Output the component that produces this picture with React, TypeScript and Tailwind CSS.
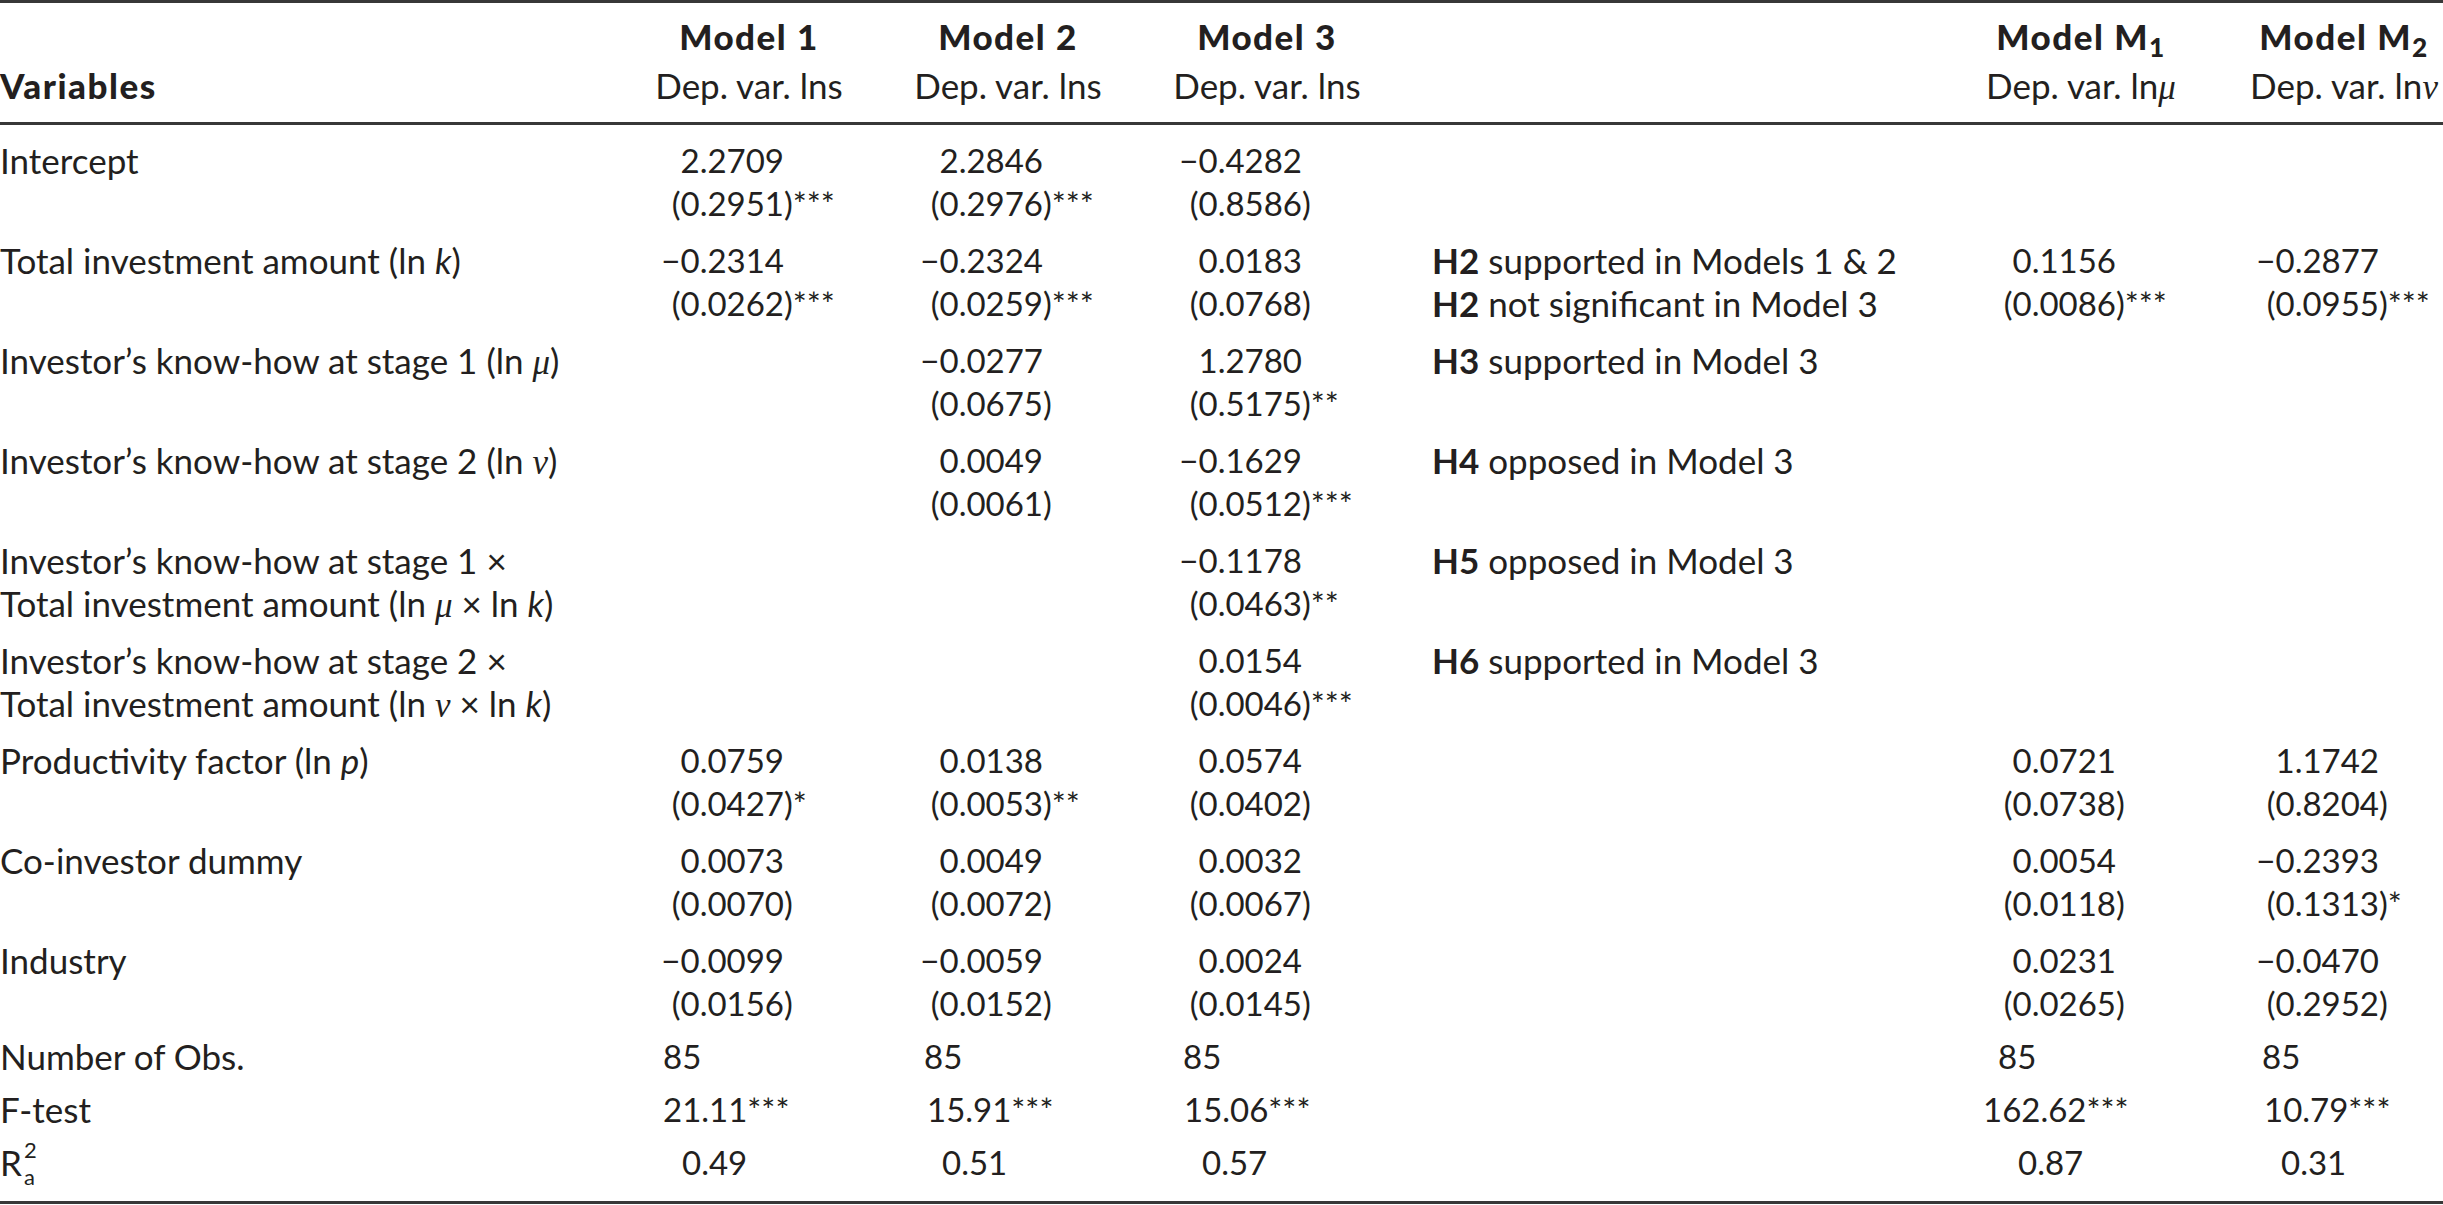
import type { ReactNode } from "react";

type Est = { c: string; cs?: string; s: string; ss?: string } | null;

type Row = {
  label: ReactNode;
  m: [Est, Est, Est];
  hyp?: ReactNode;
  mm: [Est, Est];
  last?: boolean;
};

const grid = "grid grid-cols-[634px_259px_259px_259px_555px_263px_214px]";

const Gr = ({ children }: { children: ReactNode }) => (
  <span className="font-['Liberation_Serif',serif] italic leading-none">{children}</span>
);

const H = ({ n }: { n: string }) => <span className="font-bold">{n}</span>;

const rows: Row[] = [
  {
    label: "Intercept",
    m: [
      { c: "2.2709", s: "0.2951", ss: "***" },
      { c: "2.2846", s: "0.2976", ss: "***" },
      { c: "−0.4282", s: "0.8586" },
    ],
    mm: [null, null],
  },
  {
    label: (
      <>
        Total investment amount (ln <i>k</i>)
      </>
    ),
    m: [
      { c: "−0.2314", s: "0.0262", ss: "***" },
      { c: "−0.2324", s: "0.0259", ss: "***" },
      { c: "0.0183", s: "0.0768" },
    ],
    hyp: (
      <>
        <div>
          <H n="H2" /> supported in Models 1 &amp; 2
        </div>
        <div>
          <H n="H2" /> not significant in Model 3
        </div>
      </>
    ),
    mm: [
      { c: "0.1156", s: "0.0086", ss: "***" },
      { c: "−0.2877", s: "0.0955", ss: "***" },
    ],
  },
  {
    label: (
      <>
        Investor’s know-how at stage 1 (ln <Gr>μ</Gr>)
      </>
    ),
    m: [null, { c: "−0.0277", s: "0.0675" }, { c: "1.2780", s: "0.5175", ss: "**" }],
    hyp: (
      <>
        <H n="H3" /> supported in Model 3
      </>
    ),
    mm: [null, null],
  },
  {
    label: (
      <>
        Investor’s know-how at stage 2 (ln <Gr>ν</Gr>)
      </>
    ),
    m: [null, { c: "0.0049", s: "0.0061" }, { c: "−0.1629", s: "0.0512", ss: "***" }],
    hyp: (
      <>
        <H n="H4" /> opposed in Model 3
      </>
    ),
    mm: [null, null],
  },
  {
    label: (
      <>
        <div>Investor’s know-how at stage 1 ×</div>
        <div>
          Total investment amount (ln <Gr>μ</Gr> × ln <i>k</i>)
        </div>
      </>
    ),
    m: [null, null, { c: "−0.1178", s: "0.0463", ss: "**" }],
    hyp: (
      <>
        <H n="H5" /> opposed in Model 3
      </>
    ),
    mm: [null, null],
  },
  {
    label: (
      <>
        <div>Investor’s know-how at stage 2 ×</div>
        <div>
          Total investment amount (ln <Gr>ν</Gr> × ln <i>k</i>)
        </div>
      </>
    ),
    m: [null, null, { c: "0.0154", s: "0.0046", ss: "***" }],
    hyp: (
      <>
        <H n="H6" /> supported in Model 3
      </>
    ),
    mm: [null, null],
  },
  {
    label: (
      <>
        Productivity factor (ln <i>p</i>)
      </>
    ),
    m: [
      { c: "0.0759", s: "0.0427", ss: "*" },
      { c: "0.0138", s: "0.0053", ss: "**" },
      { c: "0.0574", s: "0.0402" },
    ],
    mm: [
      { c: "0.0721", s: "0.0738" },
      { c: "1.1742", s: "0.8204" },
    ],
  },
  {
    label: "Co-investor dummy",
    m: [
      { c: "0.0073", s: "0.0070" },
      { c: "0.0049", s: "0.0072" },
      { c: "0.0032", s: "0.0067" },
    ],
    mm: [
      { c: "0.0054", s: "0.0118" },
      { c: "−0.2393", s: "0.1313", ss: "*" },
    ],
  },
  {
    label: "Industry",
    m: [
      { c: "−0.0099", s: "0.0156" },
      { c: "−0.0059", s: "0.0152" },
      { c: "0.0024", s: "0.0145" },
    ],
    mm: [
      { c: "0.0231", s: "0.0265" },
      { c: "−0.0470", s: "0.2952" },
    ],
    last: true,
  },
];

function EstCell({ e }: { e: Est }) {
  if (!e) return <div />;
  return (
    <div className="text-[33px]">
      <div className="flex">
        <span className="w-[150px] shrink-0 text-right">{e.c}</span>
        <span className="whitespace-nowrap">{e.cs}</span>
      </div>
      <div className="flex">
        <span className="w-[150px] shrink-0 text-right">({e.s}</span>
        <span className="whitespace-nowrap">){e.ss}</span>
      </div>
    </div>
  );
}

function HeadCell({ title, sub }: { title: ReactNode; sub: ReactNode }) {
  return (
    <div className="w-[230px] text-center whitespace-nowrap">
      <div className="font-black text-[35px] tracking-[1.5px] leading-[40px] pb-[6px]">{title}</div>
      <div>{sub}</div>
    </div>
  );
}

const stats = [
  {
    label: "Number of Obs.",
    vals: ["85", "85", "85", "85", "85"],
    pads: ["pl-[29px]", "pl-[31px]", "pl-[31px]", "pl-[32px]", "pl-[33px]"],
  },
  {
    label: "F-test",
    vals: ["21.11***", "15.91***", "15.06***", "162.62***", "10.79***"],
    pads: ["pl-[29px]", "pl-[34px]", "pl-[32px]", "pl-[17px]", "pl-[35px]"],
  },
  {
    label: "R2",
    vals: ["0.49", "0.51", "0.57", "0.87", "0.31"],
    pads: ["pl-[48px]", "pl-[49px]", "pl-[50px]", "pl-[52px]", "pl-[52px]"],
  },
];

export default function App() {
  return (
    <div className="w-full h-[1205px] overflow-hidden bg-white font-[Lato,sans-serif] text-[35px] text-[#231f20]">
      {/* header */}
      <div
        className={`${grid} h-[125px] overflow-hidden border-t-[3px] border-b-[3px] border-[#383838] pt-[13px] leading-[46px]`}
      >
        <div>
          <div className="h-[46px]" />
          <div className="font-black tracking-[1.5px]">Variables</div>
        </div>
        <HeadCell title="Model 1" sub="Dep. var. lns" />
        <HeadCell title="Model 2" sub="Dep. var. lns" />
        <HeadCell title="Model 3" sub="Dep. var. lns" />
        <div />
        <HeadCell
          title={
            <>
              Model M<sub>1</sub>
            </>
          }
          sub={
            <>
              Dep. var. ln<Gr>μ</Gr>
            </>
          }
        />
        <HeadCell
          title={
            <>
              Model M<sub>2</sub>
            </>
          }
          sub={
            <>
              Dep. var. ln<Gr>ν</Gr>
            </>
          }
        />
      </div>

      {/* body */}
      <div className="h-[1079px] pt-[14px] border-b-[3px] border-[#383838] leading-[43px]">
        {rows.map((r, i) => (
          <div key={i} className={`${grid} overflow-hidden ${r.last ? "h-[96px]" : "h-[100px]"}`}>
            <div className="whitespace-nowrap">{r.label}</div>
            <EstCell e={r.m[0]} />
            <EstCell e={r.m[1]} />
            <EstCell e={r.m[2]} />
            <div className="pl-[21px] whitespace-nowrap">{r.hyp}</div>
            <EstCell e={r.mm[0]} />
            <EstCell e={r.mm[1]} />
          </div>
        ))}

        {stats.map((s) => (
          <div key={s.label} className={`${grid} h-[53px]`}>
            {s.label === "R2" ? (
              <div className="flex h-[43px] items-center">
                <span>R</span>
                <span className="flex flex-col text-[22px] leading-[27px] ml-[2px]">
                  <span>2</span>
                  <span>a</span>
                </span>
              </div>
            ) : (
              <div>{s.label}</div>
            )}
            <div className={`${s.pads[0]} text-[33px]`}>{s.vals[0]}</div>
            <div className={`${s.pads[1]} text-[33px]`}>{s.vals[1]}</div>
            <div className={`${s.pads[2]} text-[33px]`}>{s.vals[2]}</div>
            <div />
            <div className={`${s.pads[3]} text-[33px]`}>{s.vals[3]}</div>
            <div className={`${s.pads[4]} text-[33px]`}>{s.vals[4]}</div>
          </div>
        ))}
      </div>
    </div>
  );
}
